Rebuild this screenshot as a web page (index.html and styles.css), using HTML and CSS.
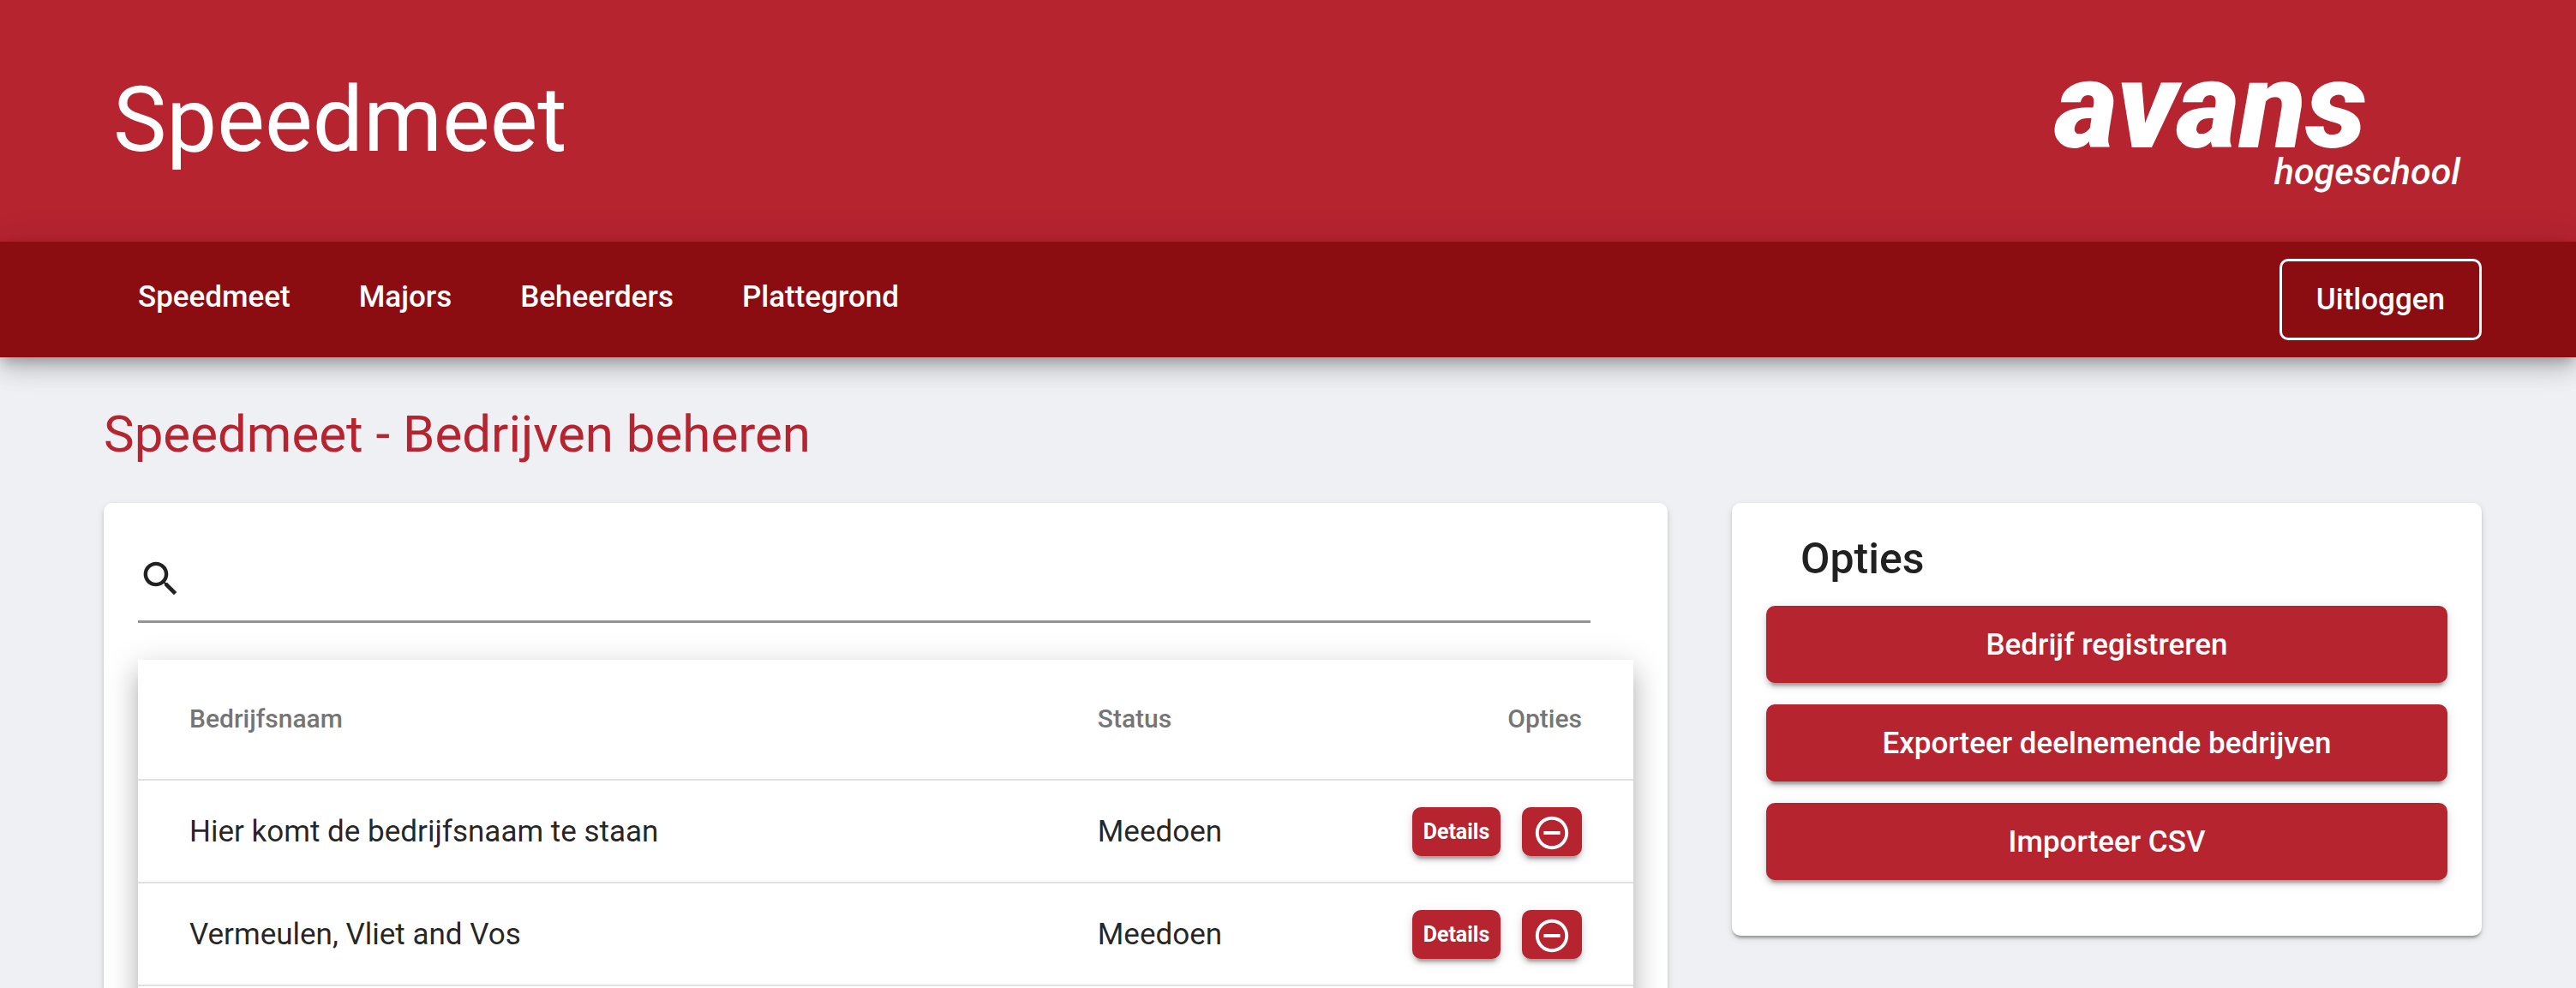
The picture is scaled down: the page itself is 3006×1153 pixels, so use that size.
FILE: index.html
```html
<!DOCTYPE html>
<html lang="nl">
<head>
  <meta charset="utf-8">
  <title>Speedmeet</title>
  <link rel="stylesheet" href="styles.css">
</head>
<body>
  <header class="banner">
    <h1 class="banner-title">Speedmeet</h1>
    <svg class="logo" viewBox="0 0 480 150" role="img" aria-label="avans hogeschool">
      <text class="logo-name" x="2" y="106">avans</text>
      <text class="logo-sub" x="475" y="149" text-anchor="end">hogeschool</text>
    </svg>
  </header>
  <nav class="toolbar">
    <div class="toolbar-links">
      <a class="toolbar-link" href="#">Speedmeet</a>
      <a class="toolbar-link" href="#">Majors</a>
      <a class="toolbar-link" href="#">Beheerders</a>
      <a class="toolbar-link" href="#">Plattegrond</a>
    </div>
    <button class="logout" type="button">Uitloggen</button>
  </nav>
  <main class="page">
    <h2 class="page-title">Speedmeet - Bedrijven beheren</h2>
    <div class="columns">
      <section class="card companies">
        <label class="search">
          <svg class="search-icon" viewBox="0 0 24 24" aria-hidden="true"><path d="M15.5 14h-.79l-.28-.27C15.41 12.59 16 11.11 16 9.5 16 5.91 13.09 3 9.5 3S3 5.91 3 9.5 5.91 16 9.5 16c1.61 0 3.09-.59 4.23-1.57l.27.28v.79l5 4.99L20.49 19l-4.99-5zm-6 0C7.01 14 5 11.99 5 9.5S7.01 5 9.5 5 14 7.01 14 9.5 11.99 14 9.5 14z"/></svg>
          <input class="search-input" type="text" aria-label="Zoeken">
        </label>
        <div class="table-panel">
          <table class="table">
            <thead>
              <tr>
                <th class="col-name">Bedrijfsnaam</th>
                <th class="col-status">Status</th>
                <th class="col-options">Opties</th>
              </tr>
            </thead>
            <tbody>
              <tr>
                <td class="col-name">Hier komt de bedrijfsnaam te staan</td>
                <td class="col-status">Meedoen</td>
                <td class="col-options">
                  <div class="actions">
                    <button class="button button-small" type="button">Details</button>
                    <button class="button button-icon" type="button" aria-label="Verwijderen"><svg class="remove-icon" viewBox="0 0 24 24" aria-hidden="true"><path d="M7 11v2h10v-2H7zm5-9C6.48 2 2 6.48 2 12s4.48 10 10 10 10-4.48 10-10S17.52 2 12 2zm0 18c-4.41 0-8-3.59-8-8s3.59-8 8-8 8 3.59 8 8-3.59 8-8 8z"/></svg></button>
                  </div>
                </td>
              </tr>
              <tr>
                <td class="col-name">Vermeulen, Vliet and Vos</td>
                <td class="col-status">Meedoen</td>
                <td class="col-options">
                  <div class="actions">
                    <button class="button button-small" type="button">Details</button>
                    <button class="button button-icon" type="button" aria-label="Verwijderen"><svg class="remove-icon" viewBox="0 0 24 24" aria-hidden="true"><path d="M7 11v2h10v-2H7zm5-9C6.48 2 2 6.48 2 12s4.48 10 10 10 10-4.48 10-10S17.52 2 12 2zm0 18c-4.41 0-8-3.59-8-8s3.59-8 8-8 8 3.59 8 8-3.59 8-8 8z"/></svg></button>
                  </div>
                </td>
              </tr>
            </tbody>
          </table>
        </div>
      </section>
      <aside class="card options">
        <h3 class="options-title">Opties</h3>
        <div class="options-list">
          <button class="button button-large" type="button">Bedrijf registreren</button>
          <button class="button button-large" type="button">Exporteer deelnemende bedrijven</button>
          <button class="button button-large" type="button">Importeer CSV</button>
        </div>
      </aside>
    </div>
  </main>
</body>
</html>
```

FILE: styles.css
```css
* {
  box-sizing: border-box;
}

body {
  display: flex;
  flex-direction: column;
  height: 100vh;
  margin: 0;
  background: #eff0f4;
  color: rgba(0, 0, 0, 0.87);
  font-family: Roboto, "Liberation Sans", sans-serif;
  font-size: 35px;
}

h1,
h2,
h3 {
  margin: 0;
}

button {
  margin: 0;
  font-family: inherit;
  font-weight: 500;
  color: #fff;
  cursor: pointer;
}

/* Banner */

.banner {
  display: flex;
  flex: none;
  align-items: center;
  justify-content: space-between;
  padding: 66px 130px 66px 132px;
  background: #b62430;
  color: #fff;
}

.banner-title {
  font-size: 105px;
  font-weight: 400;
  line-height: 150px;
}

.logo {
  width: 480px;
  height: 150px;
  fill: #fff;
  overflow: visible;
}

.logo-name {
  font-size: 142px;
  font-style: italic;
  font-weight: 900;
}

.logo-sub {
  font-size: 43px;
  font-style: italic;
  font-weight: 500;
}

/* Navigation */

.toolbar {
  position: relative;
  z-index: 1;
  display: flex;
  flex: none;
  align-items: center;
  justify-content: space-between;
  padding: 20px 110px 20px 121px;
  background: #8c0d11;
  box-shadow: 0 8px 13px -3px rgba(0, 0, 0, 0.2), 0 15px 25px 0 rgba(0, 0, 0, 0.14), 0 3px 45px 0 rgba(0, 0, 0, 0.12);
}

.toolbar-links {
  display: flex;
  padding-bottom: 5px;
}

.toolbar-link {
  padding: 0 40px;
  color: #fff;
  font-weight: 500;
  line-height: 90px;
  text-decoration: none;
}

.logout {
  padding: 0 40px;
  border: 3px solid #fff;
  border-radius: 10px;
  background: transparent;
  font-size: 35px;
  line-height: 89px;
}

/* Page */

.page {
  flex: 1;
  min-height: 0;
  padding: 50px 110px 60px 121px;
  overflow-y: auto;
  scrollbar-width: none;
}

.page-title {
  margin-bottom: 40px;
  color: #b62430;
  font-size: 60px;
  font-weight: 400;
  line-height: 80px;
}

.columns {
  display: grid;
  grid-template-columns: 1825fr 875fr;
  align-items: start;
  gap: 75px;
}

.card {
  border-radius: 10px;
  background: #fff;
  box-shadow: 0 5px 3px -3px rgba(0, 0, 0, 0.2), 0 3px 3px 0 rgba(0, 0, 0, 0.14), 0 3px 8px 0 rgba(0, 0, 0, 0.12);
}

.companies {
  padding: 40px;
}

.search {
  display: flex;
  align-items: center;
  height: 100px;
  margin: 0 50px 43px 0;
  border-bottom: 3px solid #949494;
}

.search-icon {
  flex: none;
  width: 53px;
  height: 53px;
  fill: #212121;
}

.search-input {
  flex: 1;
  min-width: 0;
  border: 0;
  outline: 0;
  background: transparent;
  font: inherit;
}

/* Company table */

.table-panel {
  padding-bottom: 60px;
  background: #fff;
  box-shadow: 0 13px 13px -8px rgba(0, 0, 0, 0.2), 0 20px 25px 3px rgba(0, 0, 0, 0.14), 0 8px 35px 5px rgba(0, 0, 0, 0.12);
}

.table {
  width: 100%;
  border-spacing: 0;
  table-layout: fixed;
}

.table th,
.table td {
  padding: 0;
  border-bottom: 2px solid #e0e0e0;
  text-align: left;
}

.table th {
  height: 141px;
  padding-bottom: 2px;
  color: #757575;
  font-size: 30px;
  font-weight: 500;
}

.table td {
  height: 120px;
}

.table .col-name {
  width: 64%;
  padding-left: 60px;
}

.table .col-status {
  padding-left: 3px;
}

.table .col-options {
  padding-right: 60px;
  text-align: right;
}

.actions {
  display: flex;
  justify-content: flex-end;
  gap: 25px;
}

/* Buttons */

.button {
  display: flex;
  align-items: center;
  justify-content: center;
  padding: 0;
  border: 0;
  border-radius: 10px;
  background: #b62430;
  box-shadow: 0 8px 3px -5px rgba(0, 0, 0, 0.2), 0 5px 5px 0 rgba(0, 0, 0, 0.14), 0 3px 13px 0 rgba(0, 0, 0, 0.12);
}

.button-small {
  width: 103px;
  height: 57px;
  font-size: 25px;
  font-weight: 700;
}

.button-icon {
  width: 70px;
  height: 57px;
}

.remove-icon {
  width: 46px;
  height: 46px;
  margin-top: 4px;
  fill: #fff;
}

.button-large {
  width: 100%;
  height: 90px;
  font-size: 35px;
}

/* Options card */

.options {
  padding: 35px 40px 65px;
}

.options-title {
  margin: 0 40px 25px;
  font-size: 50px;
  font-weight: 500;
  line-height: 60px;
}

.options-list {
  display: flex;
  flex-direction: column;
  gap: 25px;
}
```
